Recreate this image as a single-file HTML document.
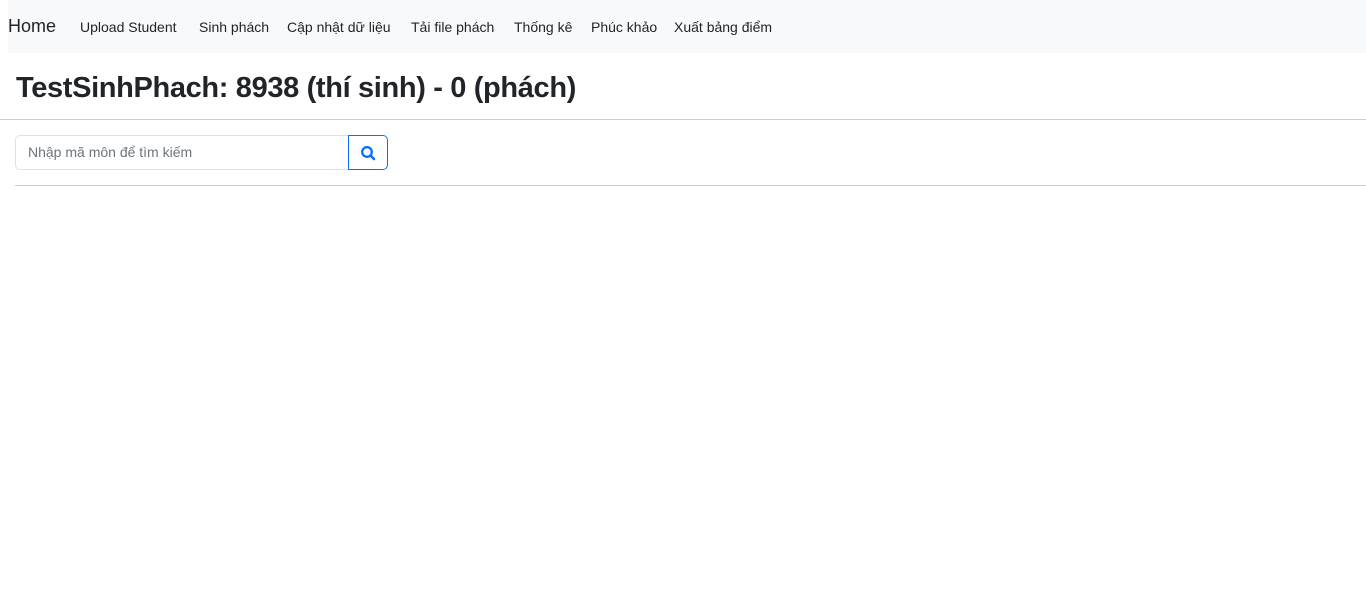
<!DOCTYPE html>
<html><head><meta charset="utf-8"><style>
body{margin:0;background:#fff;font-family:"Liberation Sans",sans-serif;color:#212529;}
.nav{position:absolute;left:8px;top:0;width:1358px;height:53px;background:#f8f9fa;}
.nav span{position:absolute;top:19px;font-size:14px;color:#212529;white-space:nowrap}
.home{font-size:18px!important;top:16px!important}
h1{position:absolute;left:16px;top:72px;margin:0;font-size:29px;font-weight:bold;white-space:nowrap;letter-spacing:-0.35px}
.hr1{position:absolute;left:0;top:119px;width:1366px;height:1px;background:#ccc}
.hr2{position:absolute;left:15px;top:185px;width:1351px;height:1px;background:#ccc}
.inp{position:absolute;left:15px;top:135px;border:1px solid #dee2e6;border-right:none;border-radius:5px 0 0 5px;font-size:14px;color:#6c757d;line-height:33px;padding-left:12px;box-sizing:border-box;width:334px;height:35px}
.btn{position:absolute;left:348px;top:135px;width:40px;height:35px;border:1px solid #0d6efd;border-radius:0 5px 5px 0;box-sizing:border-box}
</style></head><body>
<div class="nav">
<span class="home" style="left:0">Home</span>
<span style="left:72px">Upload Student</span>
<span style="left:191px">Sinh phách</span>
<span style="left:279px">Cập nhật dữ liệu</span>
<span style="left:403px">Tải file phách</span>
<span style="left:506px">Thống kê</span>
<span style="left:583px">Phúc khảo</span>
<span style="left:666px">Xuất bảng điểm</span>
</div>
<h1>TestSinhPhach: 8938 (thí sinh) - 0 (phách)</h1>
<div class="hr1"></div>
<div class="inp">Nhập mã môn để tìm kiếm</div>
<div class="btn"><svg width="38" height="33" viewBox="0 0 38 33"><circle cx="18" cy="16" r="4.8" fill="none" stroke="#0d6efd" stroke-width="2.3"/><line x1="21.5" y1="19.5" x2="25" y2="23" stroke="#0d6efd" stroke-width="2.6" stroke-linecap="round"/></svg></div>
<div class="hr2"></div>
</body></html>
